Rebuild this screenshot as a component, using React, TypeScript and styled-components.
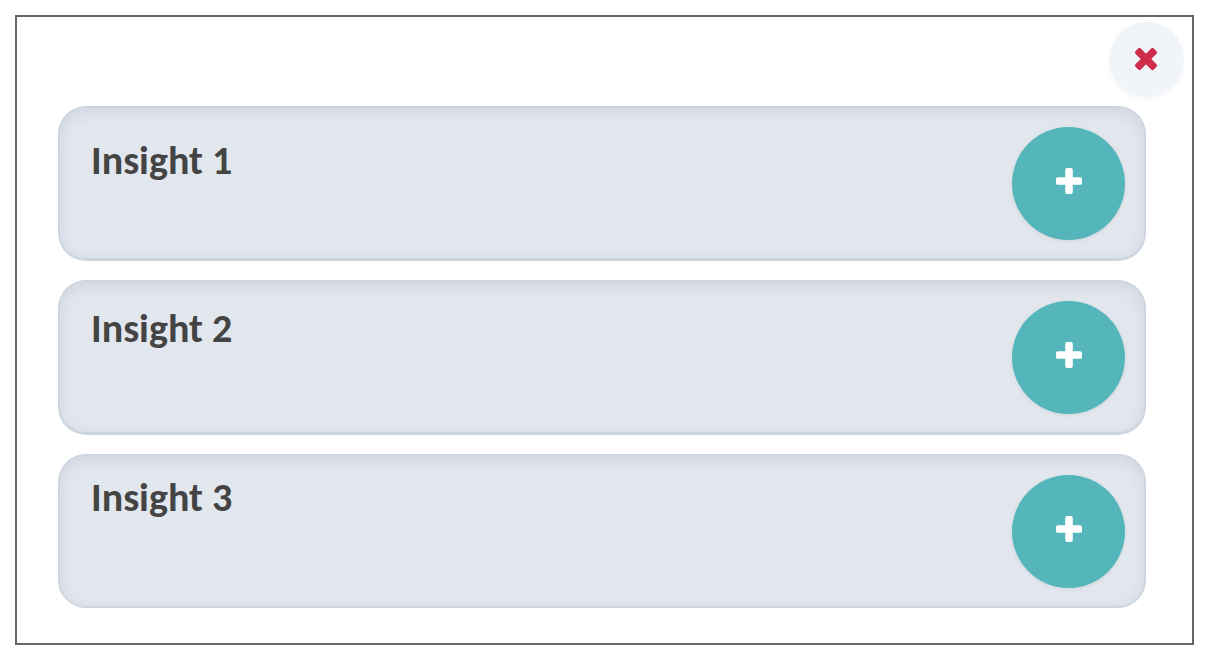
import React from "react";
import styled, { createGlobalStyle } from "styled-components";

const GlobalStyle = createGlobalStyle`
  *, *::before, *::after { box-sizing: border-box; }
  body {
    margin: 0;
    background: #ffffff;
    color: #444444;
    font-family: Calibri, Carlito, Lato, sans-serif;
  }
`;

const Page = styled.div`
  padding: 15px 16px 19px 15px;
`;

const Frame = styled.main`
  border: 2px solid #666666;
  padding-bottom: 35px;
`;

const Toolbar = styled.header`
  display: flex;
  justify-content: flex-end;
  padding: 5px 8px 9px;
`;

const RoundButton = styled.button`
  display: flex;
  align-items: center;
  justify-content: center;
  flex: none;
  padding: 0;
  border: none;
  border-radius: 50%;
  cursor: pointer;
`;

const CloseButton = styled(RoundButton)`
  width: 75px;
  height: 75px;
  padding: 0 1px 2px 0;
  background: #f1f5fa;
  color: #d02c4b;
  box-shadow: 0 2px 4px rgba(0, 0, 0, 0.04);
`;

const AddButton = styled(RoundButton)`
  width: 113px;
  height: 113px;
  padding-bottom: 5px;
  background: #54b6ba;
  color: #ffffff;
  box-shadow: 0 1px 4px rgba(0, 0, 0, 0.08);
`;

const CardList = styled.ul`
  display: flex;
  flex-direction: column;
  gap: 19px;
  margin: 0;
  padding: 0 46px 0 41px;
  list-style: none;
`;

const Card = styled.li`
  display: flex;
  align-items: flex-start;
  justify-content: space-between;
  padding: 19px 19px 18px 31px;
  border: 2px solid #cdd5e1;
  border-bottom-width: 3px;
  border-radius: 28px;
  background: #e2e7ee;
  box-shadow: inset 0 4px 14px rgba(60, 70, 90, 0.1);

  &:last-child {
    border-bottom-width: 2px;
  }
`;

const CardTitle = styled.h2<{ $lead: number }>`
  margin: 0;
  padding-top: ${({ $lead }) => $lead}px;
  font-size: 40px;
  font-weight: 700;
  line-height: 40px;
`;

const insights = [
  { title: "Insight 1", lead: 14 },
  { title: "Insight 2", lead: 8 },
  { title: "Insight 3", lead: 3 },
];

function CrossIcon({ turned = false }: { turned?: boolean }) {
  return (
    <svg width="26" height="26" viewBox="0 0 26 26" fill="currentColor" aria-hidden="true">
      <g transform={turned ? "rotate(45 13 13)" : undefined}>
        <rect x="0" y="9.2" width="26" height="7.6" rx="1.9" />
        <rect x="9.2" y="0" width="7.6" height="26" rx="1.9" />
      </g>
    </svg>
  );
}

export default function App() {
  return (
    <Page>
      <GlobalStyle />
      <Frame>
        <Toolbar>
          <CloseButton type="button" aria-label="Close">
            <CrossIcon turned />
          </CloseButton>
        </Toolbar>
        <CardList>
          {insights.map(({ title, lead }) => (
            <Card key={title}>
              <CardTitle $lead={lead}>{title}</CardTitle>
              <AddButton type="button" aria-label={`Add ${title}`}>
                <CrossIcon />
              </AddButton>
            </Card>
          ))}
        </CardList>
      </Frame>
    </Page>
  );
}
